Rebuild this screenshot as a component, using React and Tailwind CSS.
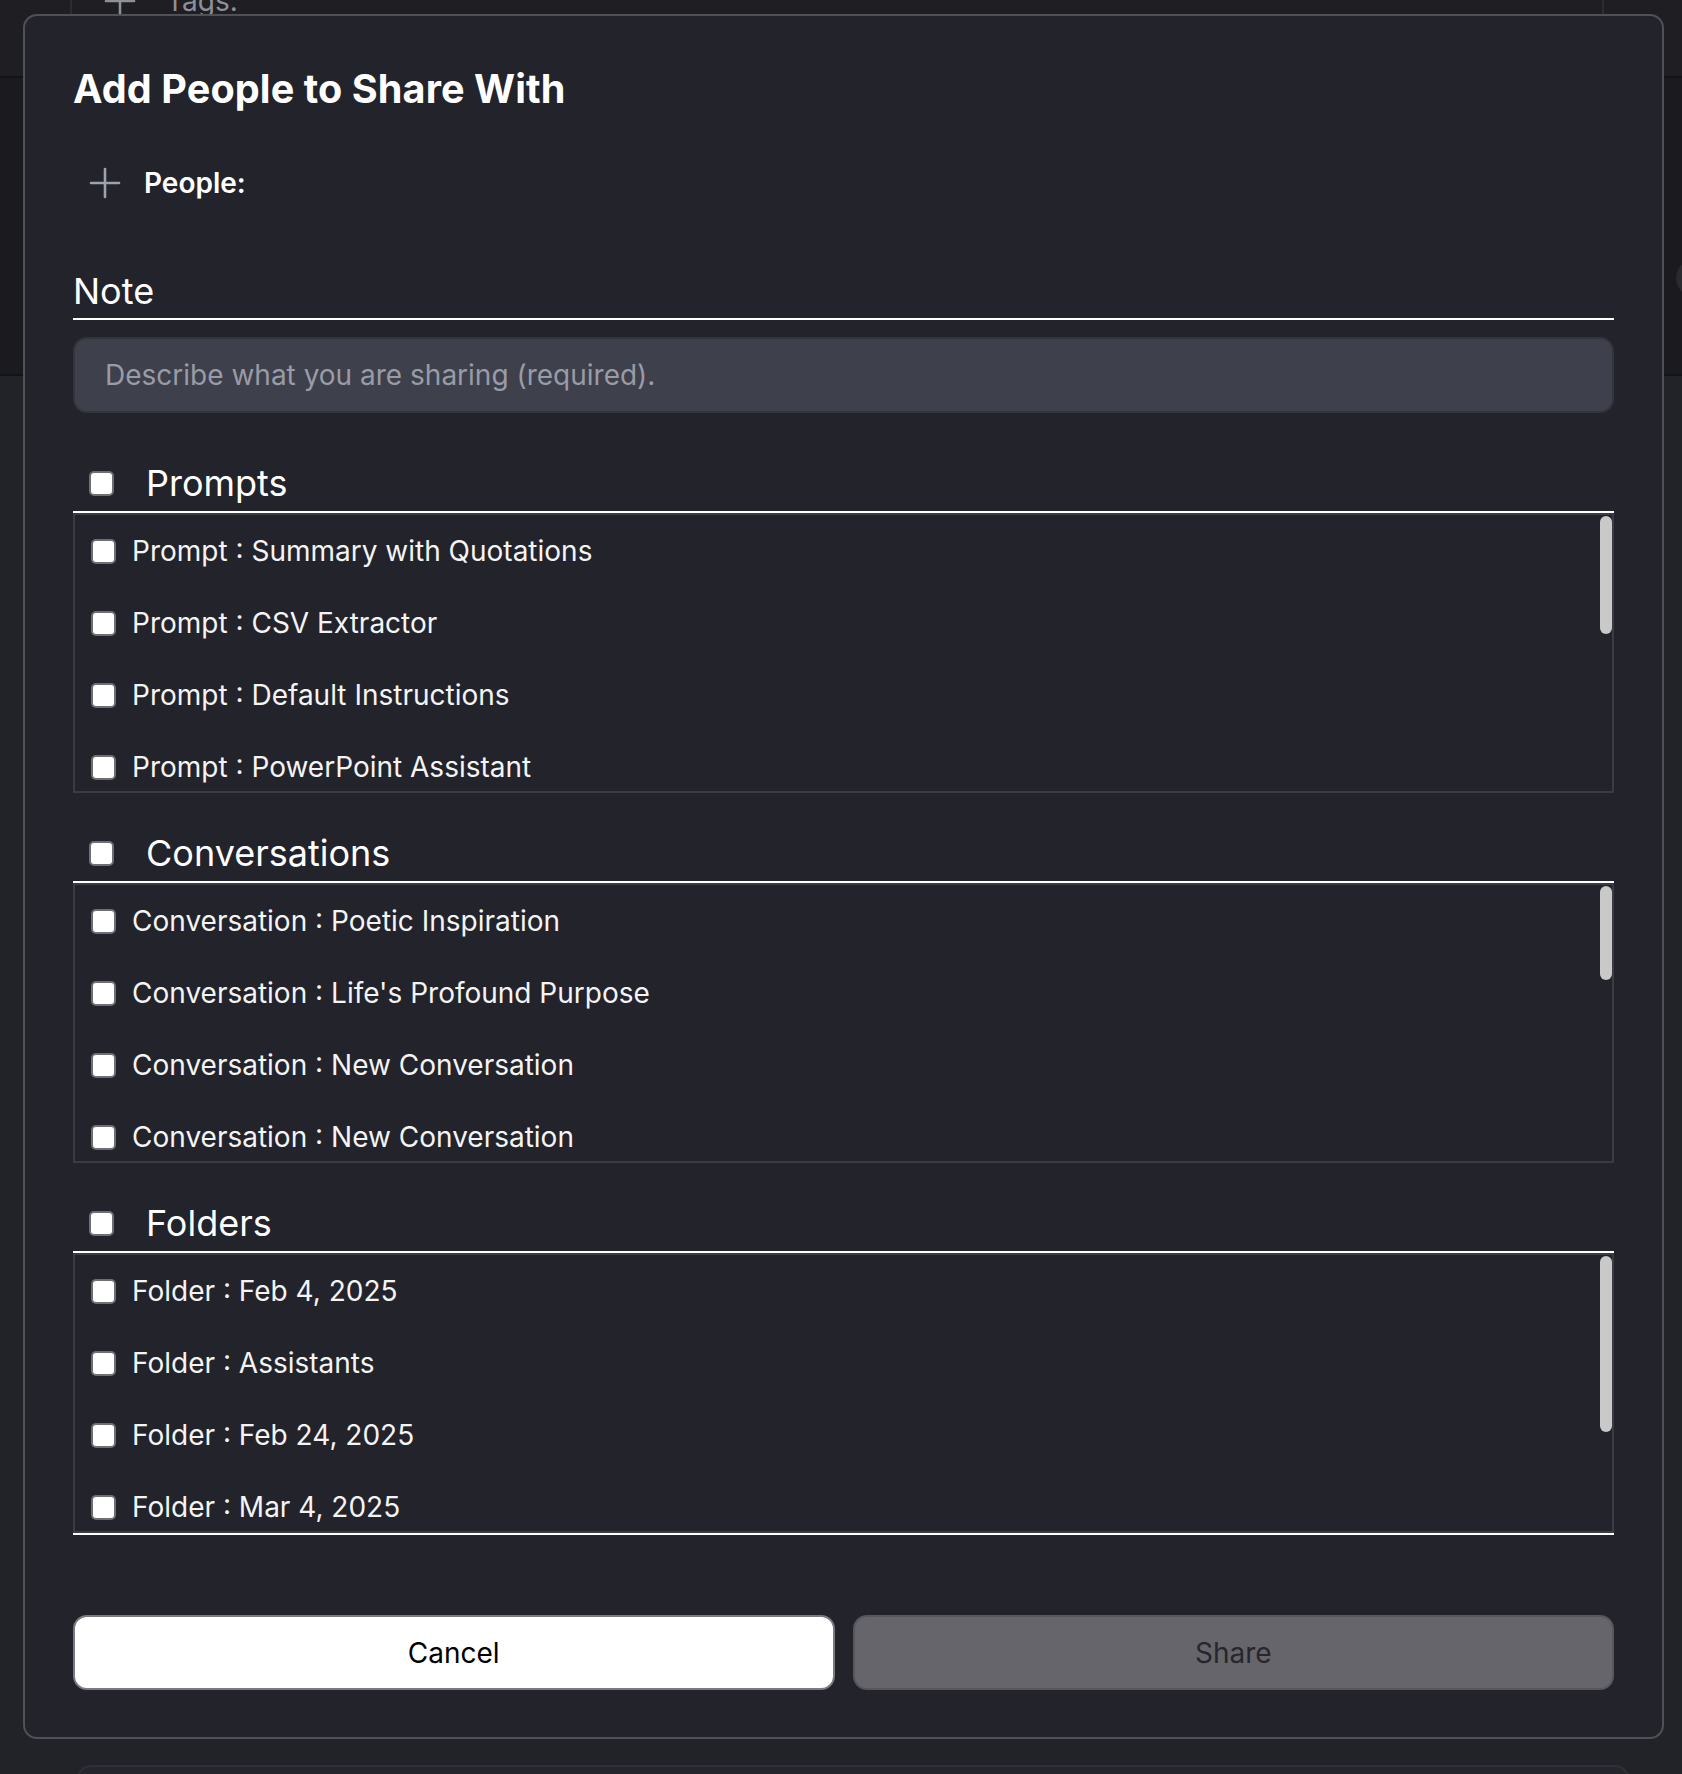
import React, { useState } from 'react';

const prompts = [
  'Summary with Quotations',
  'CSV Extractor',
  'Default Instructions',
  'PowerPoint Assistant',
  'Meeting Notes',
  'Email Draft',
  'Code Review',
  'Translate Text',
  'Outline Builder',
];

const conversations = [
  'Poetic Inspiration',
  "Life's Profound Purpose",
  'New Conversation',
  'New Conversation',
  'New Conversation',
  'Travel Plans',
  'New Conversation',
  'Budget Review',
  'New Conversation',
  'Research Summary',
  'New Conversation',
];

const folders = [
  'Feb 4, 2025',
  'Assistants',
  'Feb 24, 2025',
  'Mar 4, 2025',
  'Mar 12, 2025',
  'Archive',
];

function PlusIcon({ className }) {
  return (
    <svg viewBox="0 0 32 32" className={className} fill="none" stroke="currentColor" strokeWidth="2.6" strokeLinecap="round">
      <line x1="16" y1="2" x2="16" y2="30" />
      <line x1="2" y1="16" x2="30" y2="16" />
    </svg>
  );
}

function Box({ checked, onChange }) {
  return (
    <input
      type="checkbox"
      checked={checked}
      onChange={onChange}
      className="appearance-none w-[25px] h-[25px] shrink-0 bg-white border-2 border-[#6e6e73] rounded-[5px] checked:bg-[#3b82f6]"
    />
  );
}

function Section({ title, label, items, first, thumb }) {
  const [picked, setPicked] = useState({});
  const all = items.length > 0 && items.every((_, i) => picked[i]);

  const toggleAll = () => {
    const next = {};
    if (!all) items.forEach((_, i) => { next[i] = true; });
    setPicked(next);
  };

  return (
    <div className={first ? 'mt-[42px]' : 'mt-[32px]'}>
      {/* header */}
      <div className="flex items-center h-[58px] border-b-2 border-white pl-[16px]">
        <Box checked={all} onChange={toggleAll} />
        <span className="ml-[32px] text-[36px] leading-[40px] text-white">{title}</span>
      </div>

      {/* list */}
      <div className="relative h-[280px] border-2 border-[#3b3c43]">
        <div className="h-full overflow-hidden">
          {items.map((name, i) => (
            <label key={i} className="flex items-center h-[72px] pl-[16px] cursor-pointer">
              <Box
                checked={!!picked[i]}
                onChange={() => setPicked(p => ({ ...p, [i]: !p[i] }))}
              />
              <span className="ml-[16px] text-[28px] leading-[34px] text-[#f4f4f5]">
                {label} : {name}
              </span>
            </label>
          ))}
        </div>
        {/* scrollbar thumb */}
        <div className="absolute right-0 top-[1px] w-[12px] rounded-full bg-[#c9c9c9]" style={{ height: thumb }} />
      </div>
    </div>
  );
}

export default function App() {
  const [note, setNote] = useState('');

  return (
    <div className="relative h-[1774px] overflow-hidden bg-[#222329]" style={{ fontFamily: 'Inter, "Noto Sans", sans-serif' }}>

      {/* ================= PAGE BEHIND THE MODAL ================= */}
      <div className="h-[78px] bg-[#1e1e23] border-b-2 border-[#141418]">
        <div className="h-[14px] ml-[70px] mr-[78px] border-x-2 border-[#2c2d33] overflow-hidden">
          <div className="flex items-center gap-[30px] pl-[32px] -mt-[16px] text-[#8e9099]">
            <PlusIcon className="w-[32px] h-[32px]" />
            <span className="text-[28px] leading-[34px]">Tags:</span>
          </div>
        </div>
      </div>
      <div className="h-[298px] bg-[#1b1b1f] border-b-2 border-[#141418] flex justify-end items-start">
        <div className="w-[36px] h-[36px] rounded-full bg-[#2a2b30] mt-[182px] -mr-[30px]" />
      </div>
      <div className="absolute left-[77px] right-[53px] top-[1765px] h-[40px] rounded-t-[14px] bg-[#25262d] border-2 border-[#2f3037]" />

      {/* ================= MODAL ================= */}
      <div className="absolute left-[23px] top-[14px] w-[1641px] z-10
                      bg-[#22232b] border-2 border-[#505157] rounded-[14px]
                      px-[48px] pt-[53px] pb-[47px]">

        <h2 className="text-[39.6px] leading-[40px] font-bold text-white tracking-[0.1px]">
          Add People to Share With
        </h2>

        {/* people */}
        <div className="flex items-center h-[48px] mt-[50px] pl-[16px]">
          <button className="text-[#9ca3af]">
            <PlusIcon className="w-[32px] h-[32px]" />
          </button>
          <span className="ml-[23px] text-[28px] font-semibold text-white">People:</span>
        </div>

        {/* note */}
        <div className="mt-[64px] text-[36px] leading-[40px] text-white pb-[7px] border-b-2 border-white">
          Note
        </div>
        <input
          value={note}
          onChange={e => setNote(e.target.value)}
          placeholder="Describe what you are sharing (required)."
          className="mt-[17px] w-full h-[76px] rounded-[14px] bg-[#3e404c] border-2 border-[#33343c]
                     px-[30px] text-[28px] text-white placeholder:text-[#999ba6] outline-none"
        />

        <Section title="Prompts" label="Prompt" items={prompts} first thumb={118} />
        <Section title="Conversations" label="Conversation" items={conversations} thumb={94} />
        <Section title="Folders" label="Folder" items={folders} thumb={176} />
        <div className="h-[2px] bg-white" />

        {/* buttons */}
        <div className="flex gap-[18px] mt-[80px]">
          <button className="flex-1 h-[75px] rounded-[14px] bg-white border-2 border-[#7a7a80] text-[28px] text-black">
            Cancel
          </button>
          <button className="flex-1 h-[75px] rounded-[14px] bg-[#66656b] border-2 border-[#56565c] text-[28px] text-[#26272d]">
            Share
          </button>
        </div>
      </div>
    </div>
  );
}
